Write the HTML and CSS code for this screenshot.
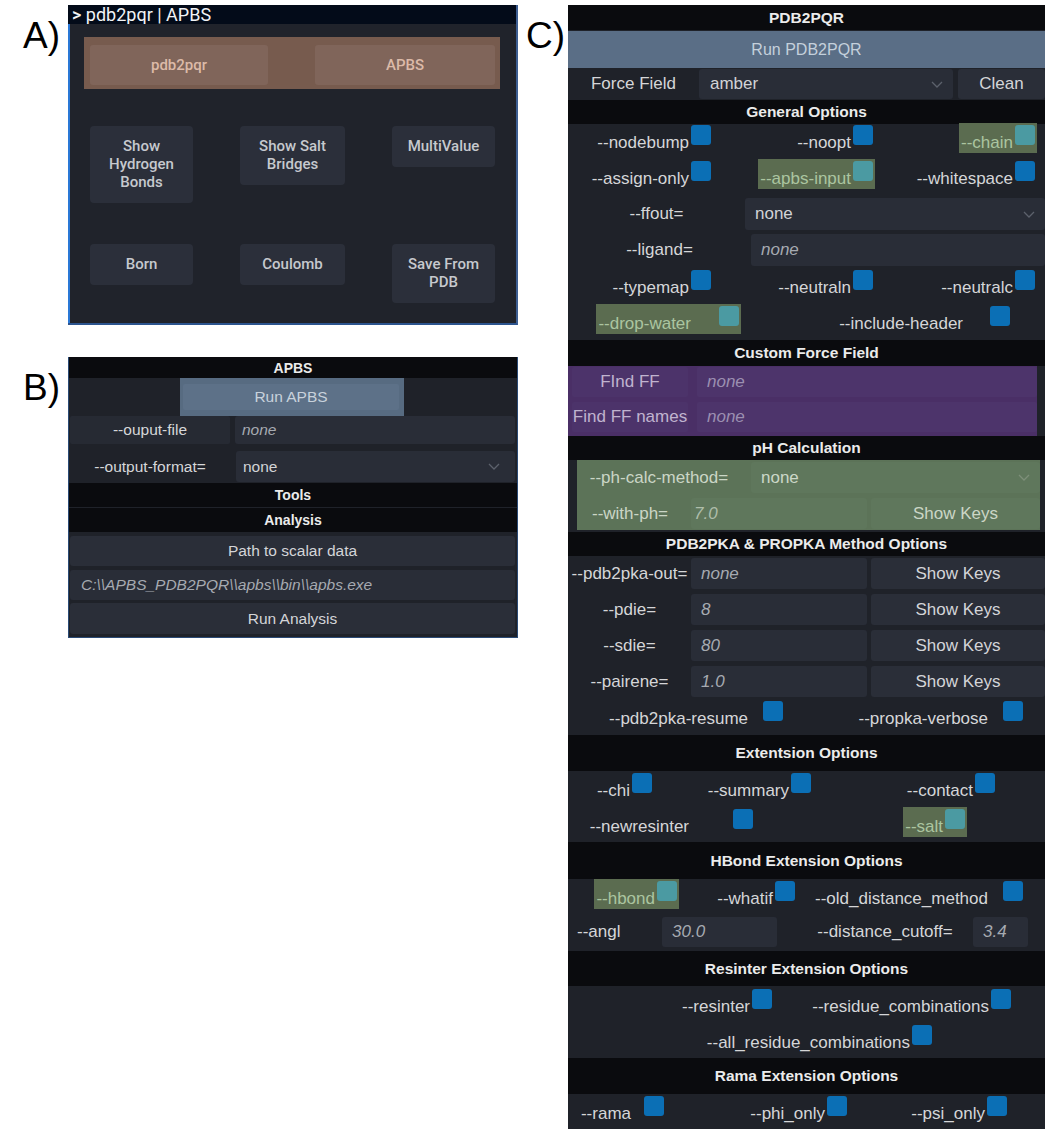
FILE: index.html
```html
<!DOCTYPE html>
<html lang="en">
<head>
<meta charset="utf-8">
<title>pdb2pqr | APBS</title>
<link rel="stylesheet" href="styles.css">
</head>
<body>
<div class="page">
  <div class="col-left">
    <div class="fig">
      <div class="fig-label">A)</div>
      <section class="pa">
        <div class="pa-title"><span class="pa-caret">&gt;</span> pdb2pqr | APBS</div>
        <div class="pa-body">
          <div class="pa-tabs">
            <div class="pa-tab">pdb2pqr</div>
            <div class="pa-tab">APBS</div>
          </div>
          <div class="pa-grid">
            <div class="pa-btn">Show Hydrogen Bonds</div>
            <div class="pa-btn">Show Salt Bridges</div>
            <div class="pa-btn">MultiValue</div>
            <div class="pa-btn">Born</div>
            <div class="pa-btn">Coulomb</div>
            <div class="pa-btn">Save From PDB</div>
          </div>
        </div>
      </section>
    </div>

    <div class="fig fig-b">
      <div class="fig-label">B)</div>
      <section class="pb">
        <div class="hdr pb-hdr">APBS</div>
        <div class="pb-run"><div class="pb-run-inner">Run APBS</div></div>
        <div class="pb-row">
          <div class="pb-lblbox">--ouput-file</div>
          <div class="field ph pb-field">none</div>
        </div>
        <div class="pb-row pb-row-sel">
          <div class="pb-lbl">--output-format=</div>
          <div class="field select pb-field">none<svg class="chev" width="12" height="7" viewBox="0 0 12 7"><path d="M1 1l5 5 5-5" fill="none" stroke="#5c616c" stroke-width="1.3"/></svg></div>
        </div>
        <div class="hdr pb-sub">Tools</div>
        <div class="hdr pb-sub pb-sub2">Analysis</div>
        <div class="pb-wide btn">Path to scalar data</div>
        <div class="pb-wide field ph pb-path">C:\\APBS_PDB2PQR\\apbs\\bin\\apbs.exe</div>
        <div class="pb-wide btn pb-last">Run Analysis</div>
      </section>
    </div>
  </div>

  <div class="fig fig-c">
    <div class="fig-label fig-label-c">C)</div>
    <section class="pc">
      <div class="hdr h25">PDB2PQR</div>
      <div class="pc-run">Run PDB2PQR</div>
      <div class="ff-row">
        <div class="ff-lbl">Force Field</div>
        <div class="field select ff-select">amber<svg class="chev" width="12" height="7" viewBox="0 0 12 7"><path d="M1 1l5 5 5-5" fill="none" stroke="#5c616c" stroke-width="1.3"/></svg></div>
        <div class="btn ff-clean">Clean</div>
      </div>

      <div class="hdr h24">General Options</div>
      <div class="sec sec-gen">
        <div class="orow g-gen3 r36">
          <div class="opt"><span class="lbl">--nodebump</span><span class="cb"></span></div>
          <div class="opt"><span class="lbl">--noopt</span><span class="cb"></span></div>
          <div class="opt hl"><span class="lbl">--chain</span><span class="cb"></span></div>
        </div>
        <div class="orow g-gen3 r36">
          <div class="opt"><span class="lbl">--assign-only</span><span class="cb"></span></div>
          <div class="opt hl"><span class="lbl">--apbs-input</span><span class="cb"></span></div>
          <div class="opt"><span class="lbl">--whitespace</span><span class="cb"></span></div>
        </div>
        <div class="frow frow-ffout">
          <div class="flbl w177">--ffout=</div>
          <div class="field select">none<svg class="chev" width="12" height="7" viewBox="0 0 12 7"><path d="M1 1l5 5 5-5" fill="none" stroke="#5c616c" stroke-width="1.3"/></svg></div>
        </div>
        <div class="frow frow-lig">
          <div class="flbl w183">--ligand=</div>
          <div class="field ph">none</div>
        </div>
        <div class="orow g-gen3 r36 mt4">
          <div class="opt"><span class="lbl">--typemap</span><span class="cb"></span></div>
          <div class="opt"><span class="lbl">--neutraln</span><span class="cb"></span></div>
          <div class="opt"><span class="lbl">--neutralc</span><span class="cb"></span></div>
        </div>
        <div class="orow g-r6 r34">
          <div class="opt hl gap28"><span class="lbl">--drop-water</span><span class="cb"></span></div>
          <div class="opt gap27"><span class="lbl">--include-header</span><span class="cb"></span></div>
        </div>
      </div>

      <div class="hdr h26">Custom Force Field</div>
      <div class="purple">
        <div class="prow">
          <div class="plbl">FInd FF</div>
          <div class="pfield">none</div>
        </div>
        <div class="prow">
          <div class="plbl">Find FF names</div>
          <div class="pfield">none</div>
        </div>
      </div>

      <div class="hdr h24">pH Calculation</div>
      <div class="sec sec-ph">
        <div class="green">
          <div class="grow">
            <div class="glbl glbl-1">--ph-calc-method=</div>
            <div class="field select gfield">none<svg class="chev" width="12" height="7" viewBox="0 0 12 7"><path d="M1 1l5 5 5-5" fill="none" stroke="#7d8f79" stroke-width="1.3"/></svg></div>
          </div>
          <div class="grow grow-2">
            <div class="glbl glbl-2">--with-ph=</div>
            <div class="field ph gfield w176">7.0</div>
            <div class="btn gbtn">Show Keys</div>
          </div>
        </div>
      </div>

      <div class="hdr h24">PDB2PKA &amp; PROPKA Method Options</div>
      <div class="sec sec-pka">
        <div class="krow">
          <div class="flbl w123">--pdb2pka-out=</div>
          <div class="field ph w176">none</div>
          <div class="btn kbtn">Show Keys</div>
        </div>
        <div class="krow">
          <div class="flbl w123">--pdie=</div>
          <div class="field ph w176">8</div>
          <div class="btn kbtn">Show Keys</div>
        </div>
        <div class="krow">
          <div class="flbl w123">--sdie=</div>
          <div class="field ph w176">80</div>
          <div class="btn kbtn">Show Keys</div>
        </div>
        <div class="krow">
          <div class="flbl w123">--pairene=</div>
          <div class="field ph w176">1.0</div>
          <div class="btn kbtn">Show Keys</div>
        </div>
        <div class="orow g-pka r34 mt4">
          <div class="opt gap15"><span class="lbl">--pdb2pka-resume</span><span class="cb"></span></div>
          <div class="opt gap15"><span class="lbl">--propka-verbose</span><span class="cb"></span></div>
        </div>
      </div>

      <div class="hdr h36">Extentsion Options</div>
      <div class="sec sec-ext">
        <div class="orow g-ext1 r36">
          <div class="opt"><span class="lbl">--chi</span><span class="cb"></span></div>
          <div class="opt"><span class="lbl">--summary</span><span class="cb"></span></div>
          <div class="opt"><span class="lbl">--contact</span><span class="cb"></span></div>
        </div>
        <div class="orow g-ext2 r33">
          <div class="opt gap44"><span class="lbl">--newresinter</span><span class="cb"></span></div>
          <div class="opt hl"><span class="lbl">--salt</span><span class="cb"></span></div>
        </div>
      </div>

      <div class="hdr h37">HBond Extension Options</div>
      <div class="sec sec-hb">
        <div class="orow g-hb1 r36">
          <div class="opt hl"><span class="lbl">--hbond</span><span class="cb"></span></div>
          <div class="opt"><span class="lbl">--whatif</span><span class="cb"></span></div>
          <div class="opt gap15"><span class="lbl">--old_distance_method</span><span class="cb"></span></div>
        </div>
        <div class="hrow">
          <div class="hlbl-a">--angl</div>
          <div class="field ph w115">30.0</div>
          <div class="hlbl-b">--distance_cutoff=</div>
          <div class="field ph w55">3.4</div>
        </div>
      </div>

      <div class="hdr h35">Resinter Extension Options</div>
      <div class="sec sec-res">
        <div class="orow g-res1 r36">
          <div class="opt"><span class="lbl">--resinter</span><span class="cb"></span></div>
          <div class="opt"><span class="lbl">--residue_combinations</span><span class="cb"></span></div>
        </div>
        <div class="orow g-res2 r33">
          <div class="opt"><span class="lbl">--all_residue_combinations</span><span class="cb"></span></div>
        </div>
      </div>

      <div class="hdr h36">Rama Extension Options</div>
      <div class="sec sec-rama">
        <div class="orow g-rama r32">
          <div class="opt gap13"><span class="lbl">--rama</span><span class="cb"></span></div>
          <div class="opt"><span class="lbl">--phi_only</span><span class="cb"></span></div>
          <div class="opt"><span class="lbl">--psi_only</span><span class="cb"></span></div>
        </div>
      </div>
    </section>
  </div>
</div>
</body>
</html>
```

FILE: styles.css
```css
* { box-sizing: border-box; }
html, body { margin: 0; padding: 0; background: #ffffff; }
body { font-family: "Liberation Sans", Arial, sans-serif; }

.page {
  display: flex;
  align-items: flex-start;
  width: 1045px;
  height: 1129px;
  overflow: hidden;
}

.col-left {
  width: 520px;
  padding-top: 5px;
  display: flex;
  flex-direction: column;
}

.fig { display: flex; align-items: flex-start; }
.fig-b { margin-top: 32px; }
.fig-c { padding-top: 5px; }

.fig-label {
  width: 68px;
  flex: none;
  padding: 12px 0 0 23px;
  font-family: "Liberation Sans", Arial, sans-serif;
  font-size: 37px;
  line-height: 37px;
  color: #000;
}
.fig-label-c { width: 48px; padding-left: 6px; }

/* ---------- Panel A ---------- */
.pa {
  width: 450px;
  height: 320px;
  display: flex;
  flex-direction: column;
  background: #20232b;
  border-right: 2px solid #3d5e92;
  border-bottom: 2px solid #2c548e;
  font-family: Roboto, "Liberation Sans", sans-serif;
}
.pa-title {
  height: 19px;
  background: #030b19;
  color: #f1f3f6;
  font-size: 18px;
  line-height: 19px;
  padding-left: 4px;
  white-space: nowrap;
  overflow: hidden;
}
.pa-caret { font-weight: 500; }
.pa-body {
  flex: 1;
  border-left: 2px solid #2a78d6;
  padding: 13px 16px 0 14px;
}
.pa-tabs {
  display: grid;
  grid-template-columns: 178px 180px;
  justify-content: space-between;
  padding: 8px 5px 4px 6px;
  background: #775b4e;
}
.pa-tab {
  height: 40px;
  line-height: 40px;
  text-align: center;
  background: #80655a;
  border-radius: 3px;
  color: #dcbaa8;
  font-size: 15px;
  font-weight: 500;
}
.pa-grid {
  display: grid;
  grid-template-columns: 103px 105px 103px;
  column-gap: 47px;
  row-gap: 41px;
  align-items: start;
  margin-top: 37px;
  padding-left: 6px;
}
.pa-btn {
  background: #2b2f3a;
  border-radius: 4px;
  padding: 11px 6px 12px;
  text-align: center;
  color: #c6c9ce;
  font-size: 15px;
  font-weight: 500;
  line-height: 18px;
}

/* ---------- shared ---------- */
.hdr {
  display: flex;
  align-items: center;
  justify-content: center;
  background: #0a0b0e;
  color: #ebebeb;
  font-weight: bold;
  font-size: 15.5px;
  white-space: nowrap;
}
.h24 { height: 24px; }
.h25 { height: 25px; }
.h26 { height: 26px; }
.h35 { height: 35px; }
.h36 { height: 36px; }
.h37 { height: 37px; }

.field {
  display: flex;
  align-items: center;
  background: #292d37;
  border-radius: 3px;
  padding: 0 10px;
  color: #d2d3d6;
  white-space: nowrap;
  flex: 1;
  min-width: 0;
}
.field.ph { font-style: italic; color: #a6aab1; }
.select { justify-content: space-between; }
.chev { flex: none; }

.btn {
  display: flex;
  align-items: center;
  justify-content: center;
  background: #2a2e38;
  border-radius: 3px;
  color: #d4d5d8;
  white-space: nowrap;
}

/* ---------- Panel B ---------- */
.pb {
  width: 450px;
  height: 281px;
  display: flex;
  flex-direction: column;
  background: #1f2229;
  border: 1px solid #2a4a75;
  border-top: 0;
  font-size: 15.5px;
  color: #d6d7d9;
}
.pb-hdr { height: 21px; font-size: 14px; }
.pb-run {
  width: 224px;
  height: 38px;
  margin-left: 111px;
  padding: 6px 5px 6px 3px;
  background: #576b81;
}
.pb-run-inner {
  height: 100%;
  display: flex;
  align-items: center;
  justify-content: center;
  background: #5d7188;
  border-radius: 2px;
  color: #c8d2dc;
}
.pb-row {
  display: flex;
  height: 28px;
  gap: 5px;
  margin: 0 2px 0 1px;
}
.pb-row-sel { height: 31px; margin-top: 7px; gap: 6px; }
.pb-lblbox {
  width: 160px;
  display: flex;
  align-items: center;
  justify-content: center;
  background: #262a33;
  border-radius: 2px;
}
.pb-lbl {
  width: 160px;
  display: flex;
  align-items: center;
  justify-content: center;
}
.pb-field { padding: 0 15px 0 7px; }
.pb-sub { height: 24px; margin-top: 1px; font-size: 14px; }
.pb-wide { height: 30px; margin: 4px 2px 0 1px; flex: none; }
.pb-path { padding-left: 11px; color: #c9cbcf; flex: none; }
.pb-last { margin-top: 3px; height: 31px; }

/* ---------- Panel C ---------- */
.pc {
  width: 477px;
  height: 1124px;
  overflow: hidden;
  display: flex;
  flex-direction: column;
  background: #1f2229;
  font-size: 17px;
  color: #d5d6d8;
}
.pc-run {
  height: 37px;
  margin-top: 1px;
  display: flex;
  align-items: center;
  justify-content: center;
  background: #5a6e86;
  color: #c4d0dc;
  font-size: 16px;
}
.ff-row {
  display: flex;
  height: 32px;
  padding-top: 1px;
}
.ff-lbl {
  width: 131px;
  display: flex;
  align-items: center;
  justify-content: center;
  height: 30px;
}
.ff-select { flex: none; width: 254px; height: 30px; padding-left: 11px; }
.ff-clean { flex: 1; height: 30px; margin-left: 5px; }

.sec { display: flex; flex-direction: column; flex: none; }
.sec-gen { height: 216px; padding-top: 1px; }
.sec-ph { height: 72px; }
.sec-pka { height: 179px; padding-top: 2px; }
.sec-ext { height: 71px; padding-top: 2px; }
.sec-hb { height: 72px; padding-top: 2px; }
.sec-res { height: 72px; padding-top: 3px; }
.sec-rama { height: 34px; padding-top: 2px; }

/* option rows with checkboxes */
.orow {
  display: grid;
  align-items: start;
  justify-items: end;
  flex: none;
}
.r32 { height: 32px; }
.r33 { height: 33px; }
.r34 { height: 34px; }
.r36 { height: 36px; }
.mt4 { margin-top: 4px; }

.g-gen3 { grid-template-columns: 143px 162px 162px; }
.g-r6 { grid-template-columns: 171px 271px; }
.g-pka { grid-template-columns: 215px 240px; }
.g-ext1 { grid-template-columns: 84px 159px 184px; }
.g-ext2 { grid-template-columns: 185px 212px; }
.g-hb1 { grid-template-columns: 109px 118px 228px; }
.g-res1 { grid-template-columns: 204px 239px; }
.g-res2 { grid-template-columns: 364px; }
.g-rama { grid-template-columns: 96px 183px 160px; }

.opt {
  display: flex;
  align-items: flex-start;
  gap: 2px;
}
.gap13 { gap: 13px; }
.gap15 { gap: 15px; }
.gap27 { gap: 27px; }
.gap28 { gap: 28px; }
.gap44 { gap: 44px; }
.lbl {
  margin-top: 8px;
  line-height: 20px;
  white-space: nowrap;
}
.cb {
  flex: none;
  width: 20px;
  height: 20px;
  border-radius: 3px;
  background: #0b6fb5;
}
.hl {
  background: #5b6c50;
  padding: 2px 2px 0;
  margin: -2px -2px 0;
}
.hl .lbl { color: #abc5a0; }
.hl .cb { background: #4b9aa2; }

/* label + field rows */
.frow { display: flex; height: 32px; flex: none; }
.frow-ffout { margin-top: 1px; }
.frow-lig { margin-top: 4px; }
.flbl {
  display: flex;
  align-items: center;
  justify-content: center;
  flex: none;
  white-space: nowrap;
}
.w177 { width: 177px; }
.w183 { width: 183px; }
.w123 { width: 123px; }
.w176 { flex: none; width: 176px; }
.w115 { flex: none; width: 115px; }
.w55 { flex: none; width: 55px; }

/* purple custom force field */
.purple {
  width: 469px;
  height: 70px;
  padding: 1px 0 0 4px;
  background: #4a2f66;
  display: flex;
  flex-direction: column;
  gap: 5px;
  flex: none;
}
.prow { display: flex; height: 30px; gap: 9px; }
.plbl {
  width: 116px;
  display: flex;
  align-items: center;
  justify-content: center;
  background: #4c336a;
  border-radius: 2px;
  color: #c0b3cf;
  white-space: nowrap;
}
.pfield {
  flex: 1;
  display: flex;
  align-items: center;
  padding: 0 10px;
  background: #4d346b;
  border-radius: 2px;
  font-style: italic;
  color: #9b8fb1;
}

/* green pH */
.green {
  width: 463px;
  height: 70px;
  margin-left: 9px;
  padding-top: 2px;
  background: #5c7358;
  display: flex;
  flex-direction: column;
  gap: 5px;
}
.grow { display: flex; height: 31px; }
.glbl {
  display: flex;
  align-items: center;
  justify-content: center;
  color: #cbd6c6;
  white-space: nowrap;
  flex: none;
}
.glbl-1 { width: 174px; padding-right: 10px; }
.glbl-2 { width: 114px; padding-right: 8px; }
.gfield { background: #5f775c; color: #ccd7c8; }
.gfield.ph { color: #aebdaa; padding-left: 3px; }
.gbtn { flex: 1; margin-left: 4px; background: #5f775c; color: #cbd6c6; }

/* pka rows */
.krow { display: flex; height: 31px; flex: none; margin-bottom: 5px; }
.kbtn { flex: 1; margin-left: 4px; }
.sec-pka .orow.mt4 { margin-top: -1px; }

/* hbond second row */
.hrow { display: flex; height: 30px; align-items: stretch; flex: none; }
.hlbl-a {
  width: 94px;
  padding-left: 9px;
  display: flex;
  align-items: center;
  flex: none;
}
.hlbl-b {
  width: 196px;
  padding-left: 20px;
  display: flex;
  align-items: center;
  justify-content: center;
  flex: none;
  white-space: nowrap;
}
```
